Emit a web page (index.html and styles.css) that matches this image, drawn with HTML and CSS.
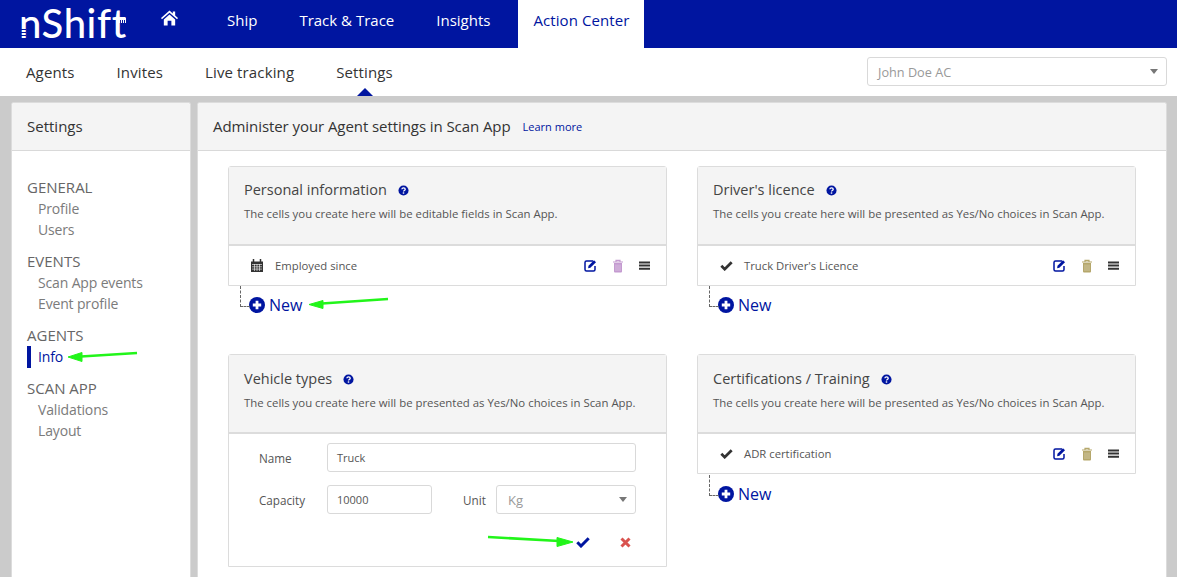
FILE: index.html
```html
<!DOCTYPE html>
<html lang="en">
<head>
<meta charset="utf-8">
<title>nShift Action Center</title>
<link rel="stylesheet" href="styles.css">
</head>
<body>
<svg class="sprites" width="0" height="0" aria-hidden="true">
  <symbol id="help" viewBox="0 0 12 12"><circle cx="6" cy="6" r="5.5" fill="#0015a0"/><path d="M4.200 4.700C4.300 3.600 5 3.100 6 3.100c1.100 0 1.900.6 1.900 1.500 0 1.500-1.900 1.300-1.900 2.600" fill="none" stroke="#fff" stroke-width="1.400"/><rect x="5.200" y="8" width="1.600" height="1.500" fill="#fff"/></symbol>
  <symbol id="plus" viewBox="0 0 16 16"><circle cx="8" cy="8" r="8" fill="#0015a0"/><path d="M8 3.800v8.400M3.800 8h8.400" stroke="#fff" stroke-width="2.800"/></symbol>
  <symbol id="edit" viewBox="0 0 13 13"><path d="M9 2H2.500A1.500 1.500 0 0 0 1 3.500v7A1.500 1.500 0 0 0 2.500 12h7a1.500 1.500 0 0 0 1.500-1.500V7" fill="none" stroke="#0015a0" stroke-width="1.500"/><path d="M4.500 6.800 10 1.200l2 2L6.400 8.800l-2.300.4z" fill="#0015a0"/></symbol>
  <symbol id="trash" viewBox="0 0 12 14"><path d="M1 3h10M4 3V1.300h4V3" fill="none" stroke="currentColor" stroke-width="1.200"/><path d="M2 4h8v8.500a1 1 0 0 1-1 1H3a1 1 0 0 1-1-1z" fill="currentColor"/><path d="M4 5.500v6.500M6 5.500v6.500M8 5.500v6.500" stroke="#fff" stroke-width=".6" opacity=".6"/></symbol>
  <symbol id="bars" viewBox="0 0 11 9"><path d="M0 .5h11v2H0zM0 3.600h11v2H0zM0 6.700h11v2H0z" fill="#333"/></symbol>
  <symbol id="check" viewBox="0 0 14 11"><path d="M1.300 5.300 5 9l7.700-7.700" fill="none" stroke="currentColor" stroke-width="3"/></symbol>
  <symbol id="cross" viewBox="0 0 11 11"><path d="M1.500 1.500l8 8M9.500 1.500l-8 8" fill="none" stroke="currentColor" stroke-width="3"/></symbol>
  <symbol id="calendar" viewBox="0 0 12 13"><path d="M0 2.500h12V13H0z" fill="#333"/><path d="M2.500 0v3M9.500 0v3" stroke="#333" stroke-width="1.500"/><path d="M1 5.500h10M1 7.800h10M1 10.100h10M3.500 5v7M6 5v7M8.500 5v7" stroke="#fff" stroke-width=".6"/></symbol>
</svg>

<header class="topbar">
  <a class="logo">nShift<span class="logo-ticks"></span></a>
  <nav class="topnav">
    <a class="home" aria-label="Home"><svg width="17" height="16" viewBox="0 0 18 16"><path d="M9 0 0 8l1 1.200L9 2.400l8 6.800L18 8l-3-2.600V1h-2.500v2.200z" fill="#fff"/><path d="M3 9.500 9 4.300l6 5.200V16h-4v-5H7v5H3z" fill="#fff"/></svg></a>
    <a>Ship</a>
    <a>Track &amp; Trace</a>
    <a>Insights</a>
    <a class="active">Action Center</a>
  </nav>
</header>

<div class="subbar">
  <nav class="subnav">
    <a>Agents</a>
    <a>Invites</a>
    <a>Live tracking</a>
    <a class="active">Settings</a>
  </nav>
  <div class="select select-user"><span>John Doe AC</span><i class="caret"></i></div>
</div>

<main class="layout">
  <aside class="sidebar">
    <h2 class="panel-head">Settings</h2>
    <div class="side-body">
      <div class="side-group"><h3>GENERAL</h3><a>Profile</a><a>Users</a></div>
      <div class="side-group"><h3>EVENTS</h3><a>Scan App events</a><a>Event profile</a></div>
      <div class="side-group"><h3>AGENTS</h3><a class="current">Info</a></div>
      <div class="side-group"><h3>SCAN APP</h3><a>Validations</a><a>Layout</a></div>
    </div>
  </aside>

  <section class="content">
    <div class="panel-head content-head"><h1>Administer your Agent settings in Scan App</h1><a>Learn more</a></div>
    <div class="cards">
      <div class="column">
        <article class="card">
          <header class="card-head">
            <h3>Personal information <svg class="help"><use href="#help"/></svg></h3>
            <p>The cells you create here will be editable fields in Scan App.</p>
          </header>
          <div class="row">
            <svg class="row-icon cal"><use href="#calendar"/></svg>
            <span class="row-label">Employed since</span>
            <span class="actions"><svg class="a-edit"><use href="#edit"/></svg><svg class="a-trash lilac"><use href="#trash"/></svg><svg class="a-bars"><use href="#bars"/></svg></span>
          </div>
        </article>
        <a class="new"><svg><use href="#plus"/></svg>New</a>

        <article class="card card-two">
          <header class="card-head">
            <h3>Vehicle types <svg class="help"><use href="#help"/></svg></h3>
            <p>The cells you create here will be presented as Yes/No choices in Scan App.</p>
          </header>
          <form class="edit-form">
            <div class="f-row"><label>Name</label><div class="input grow">Truck</div></div>
            <div class="f-row"><label>Capacity</label><div class="input short">10000</div><label class="unit">Unit</label><div class="select grow muted"><span>Kg</span><i class="caret"></i></div></div>
            <div class="f-actions"><svg class="f-check"><use href="#check"/></svg><svg class="f-cross"><use href="#cross"/></svg></div>
          </form>
        </article>
      </div>

      <div class="column">
        <article class="card">
          <header class="card-head">
            <h3>Driver's licence <svg class="help"><use href="#help"/></svg></h3>
            <p>The cells you create here will be presented as Yes/No choices in Scan App.</p>
          </header>
          <div class="row">
            <svg class="row-icon chk"><use href="#check"/></svg>
            <span class="row-label">Truck Driver's Licence</span>
            <span class="actions"><svg class="a-edit"><use href="#edit"/></svg><svg class="a-trash olive"><use href="#trash"/></svg><svg class="a-bars"><use href="#bars"/></svg></span>
          </div>
        </article>
        <a class="new"><svg><use href="#plus"/></svg>New</a>

        <article class="card card-two">
          <header class="card-head">
            <h3>Certifications / Training <svg class="help"><use href="#help"/></svg></h3>
            <p>The cells you create here will be presented as Yes/No choices in Scan App.</p>
          </header>
          <div class="row">
            <svg class="row-icon chk"><use href="#check"/></svg>
            <span class="row-label">ADR certification</span>
            <span class="actions"><svg class="a-edit"><use href="#edit"/></svg><svg class="a-trash olive"><use href="#trash"/></svg><svg class="a-bars"><use href="#bars"/></svg></span>
          </div>
        </article>
        <a class="new"><svg><use href="#plus"/></svg>New</a>
      </div>
    </div>
  </section>
</main>

<svg class="arrows" width="1177" height="577" viewBox="0 0 1177 577" aria-hidden="true">
  <g fill="#22f51a" stroke="#22f51a" stroke-linejoin="round">
    <path d="M322 303.500 388 299" stroke-width="2.600" fill="none"/><path d="M309 304.500 323 300.500 323 308.500z"/>
    <path d="M81 356.500 137 353" stroke-width="2.600" fill="none"/><path d="M68 357 82 352.500 82 361.500z"/>
    <path d="M488 537 559 541" stroke-width="2.600" fill="none"/><path d="M573 542 557 537.500 557 546.500z"/>
  </g>
</svg>
</body>
</html>
```
FILE: styles.css
```css
* { box-sizing: border-box; }
html, body { margin: 0; height: 100%; overflow: hidden; }
body {
  position: relative;
  background: #cbcbcb;
  color: #333;
  font-family: "Open Sans", "Noto Sans", "Liberation Sans", sans-serif;
  font-size: 12px;
}
a { color: inherit; text-decoration: none; }
h1, h2, h3, p { margin: 0; font-weight: 400; }
.sprites { position: absolute; }

.topbar { display: flex; height: 48px; background: #0015a0; color: #fff; }
.logo {
  display: flex; align-items: center; width: 150px; padding: 0 0 3px 19px;
  font: 500 40px/1 Lato, sans-serif; letter-spacing: .6px; position: relative;
}
.logo::before {
  content: ""; position: absolute; left: 19px; top: 27px; width: 7px; height: 11px;
  background: repeating-linear-gradient(180deg, transparent 0 2px, #0015a0 2px 3px);
}
.logo-ticks {
  position: absolute; left: 119px; top: 18px; width: 8px; height: 5px;
  background: repeating-linear-gradient(90deg, #fff 0 1px, transparent 1px 2px);
}
.topnav { display: flex; }
.topnav a { display: flex; align-items: center; padding: 0 21px 8px; font-size: 15px; }
.topnav .home { padding: 0 28px 12px 11px; }
.topnav .active { background: #fff; color: #0015a0; padding: 0 15px 8px; margin-left: 7px; letter-spacing: .08px; width: 126px; }

.subbar { display: flex; justify-content: space-between; align-items: center; height: 48px; background: #fff; padding: 0 10px 0 5px; }
.subnav { display: flex; height: 100%; }
.subnav a { display: flex; align-items: center; padding: 0 21px 1px; font-size: 15px; letter-spacing: .13px; position: relative; height: 100%; }
.subnav .active::after {
  content: ""; position: absolute; left: 50%; bottom: 0; margin-left: -8px;
  border: 8px solid transparent; border-top: 0; border-bottom-color: #0015a0;
}
.select, .input {
  display: flex; align-items: center; height: 29px; border: 1px solid #d9d9d9;
  border-radius: 3px; background: #fff; padding: 0 9px; color: #555; font-size: 11px;
}
.select { justify-content: space-between; color: #999; font-size: 13px; padding-left: 11px; }
.select-user { width: 300px; padding-left: 10px; margin-top: -1px; font-size: 12.700px; }
.caret { border: 4px solid transparent; border-top: 5px solid #777; border-bottom: 0; margin-right: -1px; }

.layout { display: flex; gap: 6px; height: 481px; padding: 6px 10px 0 11px; }
.sidebar, .content { background: #fff; border: 1px solid #dcdcdc; border-bottom: 0; border-radius: 3px 3px 0 0; overflow: hidden; }
.sidebar { width: 180px; flex: none; }
.content { flex: 1; }
.panel-head {
  display: flex; align-items: center; height: 48px; background: #f4f4f4;
  border-bottom: 1px solid #d9d9d9; padding: 0 15px 2px; font-size: 15px;
}
.side-body { padding: 24.500px 15px 0; }
.side-group { margin-bottom: 9px; }
.side-group h3 { font-size: 15px; line-height: 22px; color: #666; }
.side-group a { display: block; padding-left: 11px; font-size: 14px; line-height: 21.500px; color: #7b7b7b; letter-spacing: -.15px; }
.side-group .current { color: #0015a0; border-left: 4px solid #0015a0; padding-left: 7px; line-height: 22px; }

.content-head { gap: 12px; }
.content-head h1 { font-size: 15px; letter-spacing: -.07px; }
.content-head a { color: #0015a0; font-size: 11px; margin-top: 1px; }

.cards { display: flex; gap: 30px; padding: 15px 30px 0; }
.column { flex: 1; min-width: 0; }
.card { border: 1px solid #dcdcdc; border-radius: 3px 3px 0 0; background: #fff; }
.card-two { margin-top: 30px; }
.card-two + .new { margin-top: 1px; }
.card-head { height: 79px; background: #f4f4f4; border-bottom: 2px solid #dcdcdc; padding: 12px 15px 0; }
.card-two .card-head { padding-top: 13px; }
.card-head h3 { display: flex; align-items: center; gap: 11px; font-size: 14.500px; line-height: 22px; color: #444; }
.help { width: 11px; height: 11px; }
.card-head p { margin-top: 5px; font-size: 11.400px; line-height: 16px; color: #555; white-space: nowrap; }
.row { display: flex; align-items: center; height: 39px; padding: 0 16px 0 22px; }
.row-icon { flex: none; }
.cal { width: 12px; height: 13px; margin-right: 12px; }
.chk { width: 13px; height: 10px; margin-right: 11px; color: #333; }
.row-label { flex: 1; font-size: 11.300px; color: #555; }
.actions { display: flex; align-items: center; gap: 15px; }
.a-edit { width: 13px; height: 13px; }
.a-trash { width: 12px; height: 14px; }
.a-bars { width: 11px; height: 9px; }
.lilac { color: #c49ad0; }
.olive { color: #b5a76b; }

.new { display: flex; align-items: center; height: 38px; padding-left: 21px; color: #0015a0; font-size: 16px; position: relative; gap: 4px; }
.new svg { width: 16px; height: 16px; }
.new::before {
  content: ""; position: absolute; left: 12px; top: 0; width: 9px; height: 20px;
  border-left: 1px dashed #666; border-bottom: 1px dashed #666;
}

.edit-form { padding: 9px 30px 0; height: 132px; }
.f-row { display: flex; align-items: center; margin-bottom: 13px; }
.f-row label { width: 68px; font-size: 11.700px; color: #555; flex: none; }
.f-row .unit { width: 33px; margin-left: 31px; }
.grow { flex: 1; }
.short { width: 105px; }
.muted { color: #999; }
.f-actions { display: flex; justify-content: flex-end; align-items: center; gap: 30px; padding: 10px 5px 0 0; }
.f-check { width: 14px; height: 11px; color: #0015a0; }
.f-cross { width: 11px; height: 11px; color: #d9534f; }

.arrows { position: absolute; left: 0; top: 0; pointer-events: none; }
```
